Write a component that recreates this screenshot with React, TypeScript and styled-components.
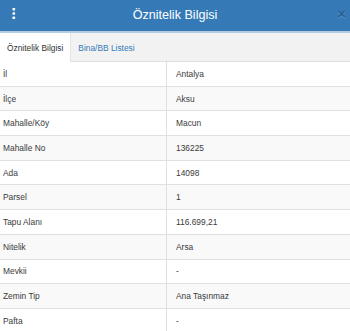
import React from 'react';
import styled, { createGlobalStyle } from 'styled-components';

const GlobalStyle = createGlobalStyle`
  html, body {
    margin: 0;
    padding: 0;
    background: #fff;
    overflow: hidden;
  }
  body {
    font-family: "Liberation Sans", Arial, sans-serif;
    color: #333;
  }
`;

const Panel = styled.div`
  width: 350px;
  height: 331px;
  display: flex;
  flex-direction: column;
  background: #fff;
  overflow: hidden;
`;

const Header = styled.div`
  position: relative;
  height: 31px;
  flex-shrink: 0;
  display: flex;
  align-items: center;
  justify-content: center;
  background: #357ab7;
  border-bottom: 2px solid #b5cde3;
`;

const MenuButton = styled.div`
  position: absolute;
  left: 12px;
  top: 8px;
  width: 4px;
  height: 12px;
  display: flex;
`;

const Title = styled.div`
  color: #fff;
  font-size: 12.6px;
  line-height: 1;
`;

const CloseButton = styled.span`
  position: absolute;
  right: 4px;
  top: 6px;
  font-size: 15px;
  font-weight: bold;
  line-height: 1;
  color: #000;
  opacity: 0.2;
  text-shadow: 0 1px 0 #fff;
`;

const Tabs = styled.div`
  height: 28px;
  flex-shrink: 0;
  display: flex;
  background: #f2f2f2;
  border-bottom: 1px solid #dedede;
`;

const Tab = styled.div<{ $active?: boolean }>`
  display: flex;
  align-items: center;
  padding: 0 7px;
  font-size: 8.4px;
  color: ${({ $active }) => ($active ? '#333' : '#337ab7')};
  background: ${({ $active }) => ($active ? '#fff' : 'transparent')};
  border-right: 1px solid ${({ $active }) => ($active ? '#e4e4e4' : 'transparent')};
  margin-bottom: -1px;
`;

const Table = styled.div`
  display: flex;
  flex-direction: column;
`;

const Row = styled.div<{ $striped?: boolean }>`
  display: grid;
  grid-template-columns: 166px 1fr;
  height: 24.7px;
  box-sizing: border-box;
  border-bottom: 1px solid #e0e0e0;
  background: ${({ $striped }) => ($striped ? '#f9f9f9' : '#fff')};
  font-size: 8.4px;
`;

const Cell = styled.div<{ $value?: boolean }>`
  display: flex;
  align-items: center;
  padding-left: ${({ $value }) => ($value ? '9px' : '3px')};
  border-left: ${({ $value }) => ($value ? '1px solid #e0e0e0' : 'none')};
  color: #3a3a3a;
  white-space: nowrap;
`;

const rows: [string, string][] = [
  ['İl', 'Antalya'],
  ['İlçe', 'Aksu'],
  ['Mahalle/Köy', 'Macun'],
  ['Mahalle No', '136225'],
  ['Ada', '14098'],
  ['Parsel', '1'],
  ['Tapu Alanı', '116.699,21'],
  ['Nitelik', 'Arsa'],
  ['Mevkii', '-'],
  ['Zemin Tip', 'Ana Taşınmaz'],
  ['Pafta', '-'],
];

export default function App() {
  return (
    <Panel>
      <GlobalStyle />
      <Header>
        <MenuButton>
          <svg width="4" height="12" viewBox="0 0 4 12">
            <rect x="0.5" y="0" width="2.6" height="2.4" rx="0.6" fill="#fff" />
            <rect x="0.5" y="4.3" width="2.6" height="2.4" rx="0.6" fill="#fff" />
            <rect x="0.5" y="8.6" width="2.6" height="2.4" rx="0.6" fill="#fff" />
          </svg>
        </MenuButton>
        <Title>Öznitelik Bilgisi</Title>
        <CloseButton>×</CloseButton>
      </Header>
      <Tabs>
        <Tab $active>Öznitelik Bilgisi</Tab>
        <Tab>Bina/BB Listesi</Tab>
      </Tabs>
      <Table>
        {rows.map(([label, value], i) => (
          <Row key={label} $striped={i % 2 === 1}>
            <Cell>{label}</Cell>
            <Cell $value>{value}</Cell>
          </Row>
        ))}
      </Table>
    </Panel>
  );
}
